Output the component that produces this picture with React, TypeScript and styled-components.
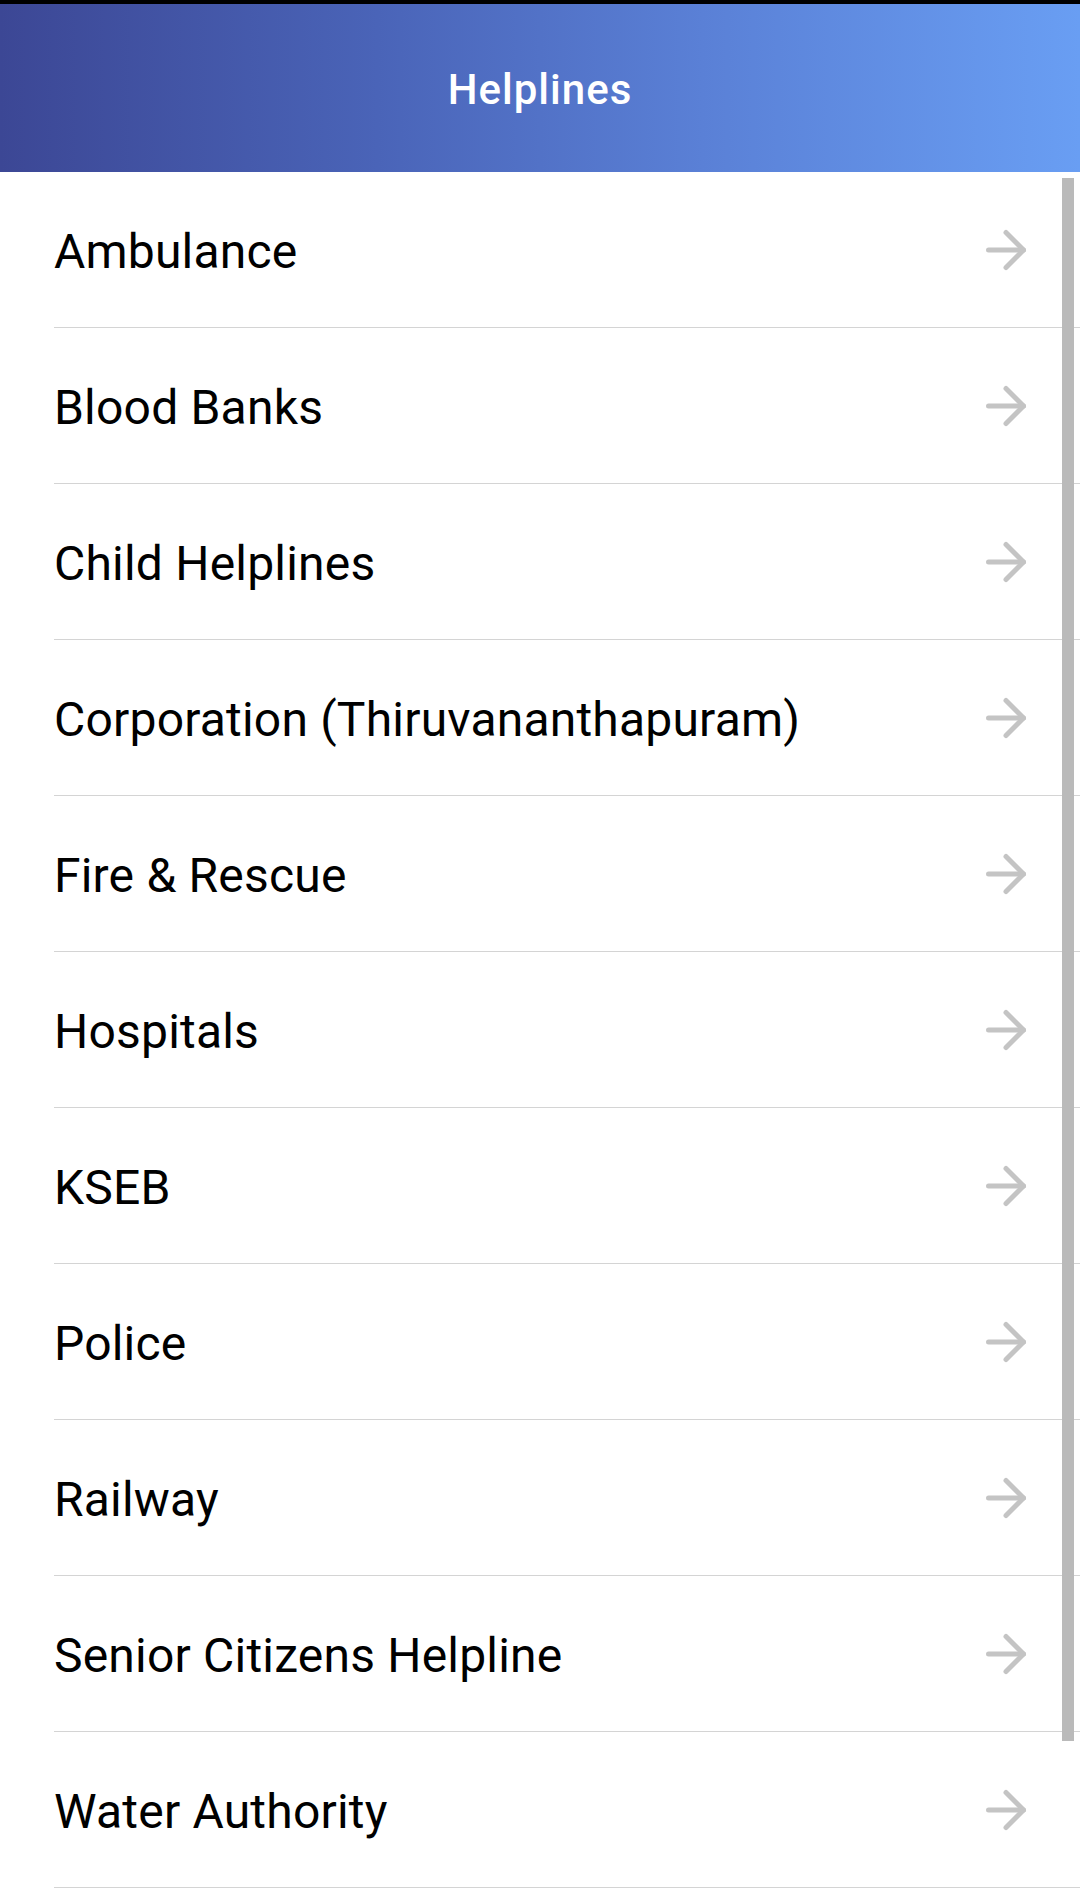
import React from "react";
import styled, { createGlobalStyle } from "styled-components";

const GlobalStyle = createGlobalStyle`
  html, body {
    margin: 0;
    padding: 0;
    background: #ffffff;
    font-family: Roboto, "Noto Sans", "Liberation Sans", sans-serif;
  }
  * { box-sizing: border-box; }
`;

const Screen = styled.div`
  position: relative;
  width: 1080px;
  height: 1895px;
  overflow: hidden;
  background: #ffffff;
`;

const StatusStrip = styled.div`
  height: 4px;
  background: #000000;
`;

const Header = styled.header`
  height: 168px;
  display: flex;
  align-items: center;
  justify-content: center;
  padding-top: 4px;
  background: linear-gradient(to right, #3c4795 0%, #4a64b8 35%, #5a80d6 65%, #699ef3 100%);
`;

const Title = styled.h1`
  margin: 0;
  color: #ffffff;
  font-family: Roboto, "Noto Sans", sans-serif;
  font-weight: 500;
  font-size: 42px;
  letter-spacing: 1px;
  line-height: 1;
`;

const List = styled.ul`
  list-style: none;
  margin: 0;
  padding: 0;
`;

const Row = styled.li`
  margin-left: 54px;
  height: 156px;
  display: flex;
  align-items: center;
  justify-content: space-between;
  padding-top: 4px;
  padding-right: 44px;
  border-bottom: 1px solid #d4d4d4;
`;

const Label = styled.span`
  color: #000000;
  font-family: Roboto, "Noto Sans", sans-serif;
  font-size: 48px;
  font-weight: 400;
  letter-spacing: 0.2px;
  line-height: 1;
`;

const ArrowIcon = styled.svg`
  width: 60px;
  height: 60px;
  flex: none;
  margin-top: -4px;
  color: #c4c4c4;
`;

const ScrollThumb = styled.div`
  position: absolute;
  left: 1062px;
  top: 178px;
  width: 12px;
  height: 1563px;
  background: #bababa;
`;

const items = [
  "Ambulance",
  "Blood Banks",
  "Child Helplines",
  "Corporation (Thiruvananthapuram)",
  "Fire & Rescue",
  "Hospitals",
  "KSEB",
  "Police",
  "Railway",
  "Senior Citizens Helpline",
  "Water Authority",
];

const Arrow = () => (
  <ArrowIcon viewBox="0 0 24 24" fill="none" stroke="currentColor" strokeWidth={2} strokeLinecap="round" strokeLinejoin="round">
    <path d="M5 12h14" />
    <path d="M12 5l7 7-7 7" />
  </ArrowIcon>
);

export default function App() {
  return (
    <Screen>
      <GlobalStyle />
      <StatusStrip />
      <Header>
        <Title>Helplines</Title>
      </Header>
      <List>
        {items.map((item) => (
          <Row key={item}>
            <Label>{item}</Label>
            <Arrow />
          </Row>
        ))}
      </List>
      <ScrollThumb />
    </Screen>
  );
}
